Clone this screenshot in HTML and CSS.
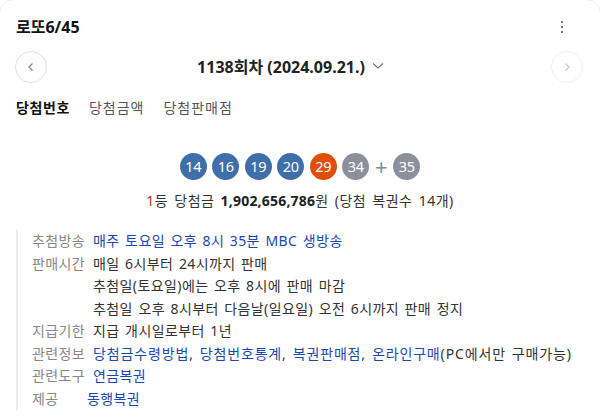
FILE: index.html
```html
<!DOCTYPE html>
<html lang="ko">
<head>
<meta charset="utf-8">
<link rel="stylesheet" href="styles.css">
</head>
<body>
<div class="card">
  <div class="header">
    <h1 class="title">로또6/45</h1>
    <span class="kebab"><i></i><i></i><i></i></span>
  </div>
  <div class="nav">
    <button class="circle">
      <svg width="12" height="12" viewBox="0 0 12 12"><path d="M7.5 2.5 L4 6 L7.5 9.5" fill="none" stroke="#888" stroke-width="1.3"/></svg>
    </button>
    <div class="round">1138회차 (2024.09.21.)
      <svg class="caret" width="14" height="10" viewBox="0 0 14 10"><path d="M2 2.5 L7 7 L12 2.5" fill="none" stroke="#777" stroke-width="1.3"/></svg>
    </div>
    <button class="circle circle--off">
      <svg width="12" height="12" viewBox="0 0 12 12"><path d="M4.5 2.5 L8 6 L4.5 9.5" fill="none" stroke="#ccc" stroke-width="1.3"/></svg>
    </button>
  </div>
  <div class="tabs">
    <span class="tab tab--on">당첨번호</span>
    <span class="tab">당첨금액</span>
    <span class="tab">당첨판매점</span>
  </div>
  <div class="balls">
    <span class="ball ball--blue">14</span>
    <span class="ball ball--blue">16</span>
    <span class="ball ball--blue">19</span>
    <span class="ball ball--blue">20</span>
    <span class="ball ball--red">29</span>
    <span class="ball ball--gray">34</span>
    <span class="plus">+</span>
    <span class="ball ball--gray">35</span>
  </div>
  <p class="prize"><span class="rank">1</span>등 당첨금 <b>1,902,656,786</b>원 (당첨 복권수 14개)</p>
  <dl class="info">
    <div class="row"><dt>추첨방송</dt><dd class="link">매주 토요일 오후 8시 35분 MBC 생방송</dd></div>
    <div class="row"><dt>판매시간</dt><dd>매일 6시부터 24시까지 판매<br>추첨일(토요일)에는 오후 8시에 판매 마감<br>추첨일 오후 8시부터 다음날(일요일) 오전 6시까지 판매 정지</dd></div>
    <div class="row"><dt>지급기한</dt><dd>지급 개시일로부터 1년</dd></div>
    <div class="row"><dt>관련정보</dt><dd class="wide"><span class="link">당첨금수령방법</span>, <span class="link">당첨번호통계</span>, <span class="link">복권판매점</span>, <span class="link">온라인구매</span>(PC에서만 구매가능)</dd></div>
    <div class="row"><dt>관련도구</dt><dd class="link">연금복권</dd></div>
    <div class="row row--src"><dt>제공</dt><dd class="link">동행복권</dd></div>
  </dl>
</div>
</body>
</html>
```
FILE: styles.css
```css
html, body {
  margin: 0;
  padding: 0;
  background: #fff;
}
body {
  font-family: "Noto Sans", "Noto Sans CJK KR", sans-serif;
  color: #222;
  font-size: 14px;
}
.card {
  margin: -1px;
  height: 440px;
  border: 1px solid #ececec;
  border-radius: 14px;
  box-sizing: border-box;
  overflow: hidden;
}
.header {
  display: flex;
  justify-content: space-between;
  align-items: center;
  padding: 17px 37px 0 16px;
}
.title {
  margin: 0;
  font-size: 16px;
  line-height: 20px;
  font-weight: 700;
  color: #111;
}
.kebab {
  display: flex;
  flex-direction: column;
  gap: 2.5px;
}
.kebab i {
  display: block;
  width: 2.5px;
  height: 2.5px;
  background: #777;
}
.nav {
  display: flex;
  align-items: center;
  margin-top: 14px;
  padding: 0 17px 0 15px;
}
.circle {
  width: 32px;
  height: 32px;
  padding: 0;
  border: 1px solid #e2e2e2;
  border-radius: 50%;
  background: #fff;
  display: flex;
  align-items: center;
  justify-content: center;
}
.circle--off {
  border-color: #eeeeee;
}
.round {
  flex: 1;
  display: flex;
  justify-content: center;
  align-items: center;
  gap: 6px;
  font-size: 16px;
  font-weight: 700;
  line-height: 20px;
  color: #222;
  padding-right: 16px;
}
.caret {
  margin-top: -2px;
}
.tabs {
  display: flex;
  gap: 19px;
  margin-top: 15px;
  padding-left: 16px;
  line-height: 20px;
  letter-spacing: 1px;
}
.tab {
  color: #555;
  font-size: 14px;
}
.tab--on {
  color: #111;
  font-weight: 700;
  letter-spacing: 0.6px;
}
.balls {
  display: flex;
  justify-content: center;
  align-items: center;
  gap: 5.5px;
  margin-top: 35px;
}
.ball {
  width: 27px;
  height: 27px;
  border-radius: 50%;
  color: #fff;
  font-size: 14.5px;
  line-height: 27px;
  text-align: center;
  letter-spacing: -0.3px;
}
.ball--blue { background: #3f6fa9; }
.ball--red { background: #e04e0c; }
.ball--gray { background: #8e8f9d; }
.plus {
  color: #8a8a8a;
  font-size: 22px;
  line-height: 27px;
  width: 13px;
  text-align: center;
}
.prize {
  margin: 11px 0 0;
  text-align: center;
  line-height: 20px;
  color: #333;
  letter-spacing: 0.5px;
  word-spacing: 2px;
}
.prize b {
  font-weight: 700;
  color: #222;
  letter-spacing: 0.2px;
}
.rank {
  color: #a8321f;
}
.info {
  margin: 19px 0 0 16px;
  padding-left: 14px;
  border-left: 2px solid #ececec;
}
.row {
  display: flex;
  line-height: 22.5px;
  letter-spacing: 0.4px;
  word-spacing: 1.5px;
}
.row dt {
  width: 61px;
  flex: none;
  color: #888;
}
.row dd {
  margin: 0;
  color: #333;
}
.row dd.wide {
  letter-spacing: 0.85px;
}
.row--src dt {
  width: 55px;
}
.link,
.row dd.link {
  color: #1a47b0;
}
```
